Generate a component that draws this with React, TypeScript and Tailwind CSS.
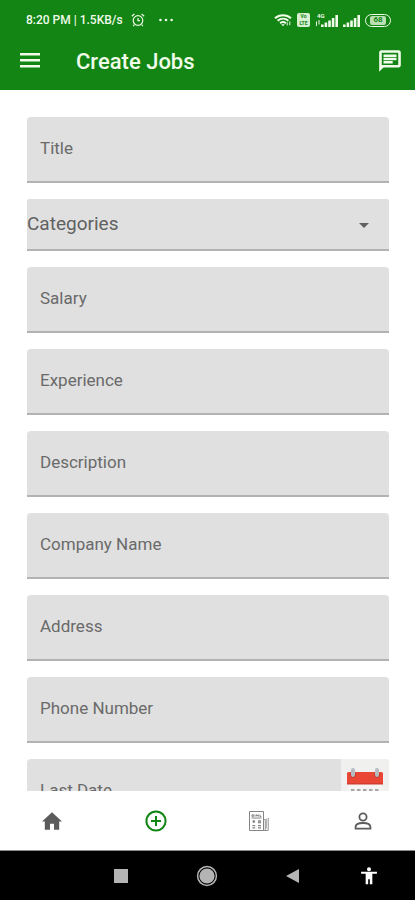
import type { ReactNode } from "react"

const textFields = ["Salary", "Experience", "Description", "Company Name", "Address", "Phone Number"]

type TextFieldProps = {
  label: string
  children?: ReactNode
}

export default function App() {
  return (
    <div className="flex h-screen flex-col bg-white font-['Roboto',sans-serif]">
      <header className="shrink-0 bg-[#128514] text-[#f0fbe9]">
        <StatusBar />
        <div className="flex h-13 items-start pr-3 pl-4">
          <button type="button" aria-label="Open menu" className="mt-2">
            <svg viewBox="0 0 28 28" className="size-7" fill="currentColor">
              <path d="M4 7h20v2.6H4zM4 13h20v2.6H4zM4 19h20v2.6H4z" />
            </svg>
          </button>
          <h1 className="ml-8 flex-1 text-[22px] leading-12 font-medium">Create Jobs</h1>
          <button type="button" aria-label="Messages" className="mt-2.5">
            <svg viewBox="0 0 24 24" className="size-[26px]" fill="currentColor">
              <path d="M2 22V4c0-1.1.9-2 2-2h16c1.1 0 2 .9 2 2v12c0 1.1-.9 2-2 2H6zM4.4 15.6h15.2V4.4H4.4z" fillRule="evenodd" />
              <path d="M6 6h12v2.2H6zM6 9h12v2.2H6zM6 12h8.5v2.2H6z" />
            </svg>
          </button>
        </div>
      </header>

      <main className="min-h-0 flex-1 overflow-hidden">
        <form className="flex flex-col gap-4 pt-[27px] pr-[26px] pl-[27px]">
          <TextField label="Title" />
          <div className="relative">
            <select
              aria-label="Categories"
              className="block h-13 w-full appearance-none rounded-t-xs border-b-2 border-[#b2b2b2] bg-[#e0e0e0] text-[19px] text-[#616161]"
            >
              <option>Categories</option>
            </select>
            <svg viewBox="0 0 10 5" className="pointer-events-none absolute top-6 right-5 h-[5px] w-[10px]" fill="#606060">
              <path d="M0 0h10L5 5z" />
            </svg>
          </div>
          {textFields.map((label) => (
            <TextField key={label} label={label} />
          ))}
          <TextField label="Last Date">
            <button type="button" aria-label="Pick a date" className="flex h-full w-12 justify-center bg-[#f0f0ee] pt-2">
              <CalendarIcon />
            </button>
          </TextField>
        </form>
      </main>

      <TabBar />
      <SystemBar />
    </div>
  )
}

function TextField({ label, children }: TextFieldProps) {
  return (
    <div className="flex h-[66px] shrink-0 overflow-hidden rounded-t-sm border-b-2 border-[#b2b2b2] bg-[#e0e0e0]">
      <label className="flex min-w-0 flex-1 items-center gap-3 pl-[13px] text-[17px] text-[#6a6a6a]">
        <span className="shrink-0">{label}</span>
        <input type="text" className="h-full min-w-0 flex-1 bg-transparent outline-none" />
      </label>
      {children}
    </div>
  )
}

function StatusBar() {
  return (
    <div className="flex h-[38px] items-center pt-[2px] pr-6 pl-[26px]">
      <p className="text-xs font-medium">8:20 PM | 1.5KB/s</p>
      <svg viewBox="0 0 14 14" className="ml-2 size-[14px]" fill="none" stroke="currentColor" strokeWidth="1.2">
        <circle cx="7" cy="7.5" r="4.8" />
        <path d="M7 5v2.7h2M.8 3.2 3.4 1M13.2 3.2 10.6 1M3.4 11.5l-1.2 1.6M10.6 11.5l1.2 1.6" />
      </svg>
      <svg viewBox="0 0 14 4" className="ml-[14px] h-1 w-[14px]" fill="currentColor">
        <circle cx="1.4" cy="2" r="1.3" />
        <circle cx="7" cy="2" r="1.3" />
        <circle cx="12.6" cy="2" r="1.3" />
      </svg>

      <div className="ml-auto flex items-center">
        <svg viewBox="0 0 18 14" className="h-[14px] w-[18px]" fill="none" stroke="currentColor" strokeWidth="2">
          <path d="M1 5.2c4.6-4 11.4-4 16 0M3.6 7.8c3.2-2.7 7.6-2.7 10.8 0M6.1 10.2c1.8-1.4 4-1.4 5.8 0" />
          <path d="M7.2 11.2h3.6L9 13.2z" fill="currentColor" stroke="none" />
          <path d="M13.2 12.4v-3M15.8 8.4v3.8" strokeWidth="1" />
        </svg>
        <span className="ml-[5px] flex h-[14px] w-[13px] flex-col items-center justify-center rounded-xs bg-[#d6efd0] text-[5px] leading-[7px] font-bold text-[#128514]">
          <span>Vo</span>
          <span>LTE</span>
        </span>
        <span className="relative ml-[5px] flex h-[14px] w-[23px] items-end justify-end">
          <span className="absolute top-0 left-[2px] text-[6px] leading-[6px] font-bold">4G</span>
          <svg viewBox="0 0 6 6" className="absolute bottom-px left-0 size-[6px]" fill="none" stroke="currentColor">
            <path d="M1.5 6V1.5M4 0v4.5" />
          </svg>
          <SignalIcon />
        </span>
        <span className="ml-[5px] flex h-[14px] items-end">
          <SignalIcon />
        </span>
        <span className="ml-[5px] flex h-[13px] w-[26px] items-center justify-center rounded-full border border-current p-px">
          <span className="flex h-full w-4 items-center justify-center rounded-xs bg-[#b9dfb2] text-[8px] leading-none font-bold text-[#128514]">
            68
          </span>
        </span>
      </div>
    </div>
  )
}

function SignalIcon() {
  return (
    <svg viewBox="0 0 17 12" className="h-3 w-[17px]" fill="currentColor">
      <path d="M0 9.5h2.6V12H0zM3.6 7.6h2.6V12H3.6zM7.2 5.4h2.6V12H7.2zM10.8 3h2.6v9h-2.6zM14.4 0H17v12h-2.6z" />
    </svg>
  )
}

function CalendarIcon() {
  return (
    <svg viewBox="0 0 38 46" className="h-[46px] w-[38px]">
      <path d="M2 17h34v25H2z" fill="#f6f4f2" />
      <path d="M1 6.5Q1 5 2.5 5h33Q37 5 37 6.5V17H1z" fill="#ea4636" />
      <path d="M1 16h36v1.6H1z" fill="#d23d30" />
      <circle cx="7" cy="8" r="2.8" fill="#c23529" />
      <circle cx="31" cy="8" r="2.8" fill="#c23529" />
      <rect x="5" y="1" width="4" height="9" rx="2" fill="#b5bcc2" />
      <rect x="29" y="1" width="4" height="9" rx="2" fill="#b5bcc2" />
      <path
        d="M5 22h3.5v3H5zM11 22h3.5v3H11zM17 22h3.5v3H17zM23 22h3.5v3H23zM29 22h3.5v3H29zM5 29h3.5v3H5zM11 29h3.5v3H11zM17 29h3.5v3H17zM23 29h3.5v3H23z"
        fill="#a5a8aa"
      />
    </svg>
  )
}

function TabBar() {
  return (
    <nav className="grid h-[60px] shrink-0 grid-cols-4 border-b border-[#8a8a8a] bg-white text-[#5c5c5c]">
      <a href="#home" aria-label="Home" className="flex items-center justify-center">
        <svg viewBox="0 0 24 24" className="size-6" fill="currentColor">
          <path d="M10 20.8v-6h4v6h5.2v-8.3H22L12 3.2 2 12.5h2.8v8.3z" />
        </svg>
      </a>
      <a href="#create" aria-label="Create job" className="flex items-center justify-center text-[#128514]">
        <svg viewBox="0 0 24 24" className="size-6" fill="none" stroke="currentColor" strokeWidth="2">
          <circle cx="12" cy="12" r="9.6" />
          <path d="M12 7v10M7 12h10" />
        </svg>
      </a>
      <a href="#news" aria-label="Job news" className="flex items-center justify-center text-[#858585]">
        <svg viewBox="0 0 22 22" className="size-[22px]" fill="none" stroke="currentColor">
          <path d="M1.5 1.5h14v19h-14z" />
          <path d="M15.5 9.5h1.8v10.8M20.2 8v12.5h-5" strokeWidth=".9" />
          <path d="M18.5 8.5v10" strokeWidth=".6" />
          <path d="M4 6.4V4.8h1.4v1.6zM7 4.6v2M8.6 6.4V4.6l1.8 1.8V4.6M12 4.6v2h1.4M3.5 8h10" strokeWidth="1" />
          <path d="M4.5 11.5h2.6M5.8 10v3M10 11h3M10 12.6h3M4.4 15.6h2.8M4.4 17.8h2.8M10 15.6h3M10 17.8h3" strokeWidth="1.3" />
        </svg>
      </a>
      <a href="#profile" aria-label="Profile" className="flex items-center justify-center">
        <svg viewBox="0 0 24 24" className="size-6" fill="none" stroke="currentColor" strokeWidth="1.8">
          <circle cx="12" cy="8" r="3.6" />
          <path d="M4.6 19.6v-1.8c0-2.4 3.3-3.8 7.4-3.8s7.4 1.4 7.4 3.8v1.8z" />
        </svg>
      </a>
    </nav>
  )
}

function SystemBar() {
  return (
    <div className="flex h-[49px] shrink-0 items-center justify-end gap-[54px] bg-black pr-9 text-[#b4b4b4]">
      <div className="flex gap-[62px]">
        <button type="button" aria-label="Recent apps">
          <svg viewBox="0 0 24 24" className="size-6" fill="currentColor">
            <path d="M5 5h14v14H5z" />
          </svg>
        </button>
        <button type="button" aria-label="Home screen">
          <svg viewBox="0 0 24 24" className="size-6" fill="currentColor">
            <circle cx="12" cy="12" r="7.6" />
            <circle cx="12" cy="12" r="9.4" fill="none" stroke="currentColor" strokeWidth="1.5" />
          </svg>
        </button>
        <button type="button" aria-label="Back">
          <svg viewBox="0 0 24 24" className="size-6" fill="currentColor">
            <path d="M18 5v14L5 12z" />
          </svg>
        </button>
      </div>
      <button type="button" aria-label="Accessibility" className="text-white">
        <svg viewBox="0 0 24 24" className="size-5" fill="currentColor">
          <circle cx="12" cy="3.8" r="2.4" />
          <path d="M21.5 9.4H16V22h-3v-6h-2v6H8V9.4H2.500V6.800h19z" />
        </svg>
      </button>
    </div>
  )
}
